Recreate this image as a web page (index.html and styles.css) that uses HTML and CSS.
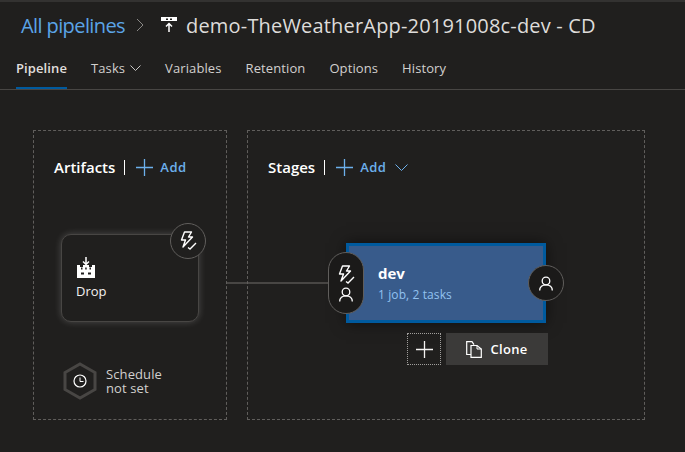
FILE: index.html
```html
<!DOCTYPE html>
<html lang="en">
<head>
<meta charset="utf-8">
<title>demo-TheWeatherApp-20191008c-dev - CD</title>
<link rel="stylesheet" href="styles.css">
</head>
<body>
<header class="header">
  <div class="crumbs">
    <a class="crumb-link">All pipelines</a>
    <svg class="crumb-sep" width="8" height="14" viewBox="0 0 8 14"><path d="M1 1l6 6-6 6" fill="none" stroke="#8a8886" stroke-width="1"/></svg>
    <svg class="crumb-icon" width="16" height="16" viewBox="0 0 16 16"><path d="M0 0h16v4h-16z" fill="#fff"/><path d="M5 1.500h2v1.500h-2zM9 1.500h2v1.500h-2z" fill="#201f1e"/><path d="M8 15V7M5 9.500l3-3 3 3" fill="none" stroke="#fff" stroke-width="1.500"/></svg>
    <h1 class="title">demo-TheWeatherApp-20191008c-dev - CD</h1>
  </div>
  <nav class="tabs">
    <a class="tab tab-active">Pipeline</a>
    <a class="tab">Tasks <svg class="chev" width="11" height="6" viewBox="0 0 11 6"><path d="M.5.500l5 5 5-5" fill="none" stroke="#c8c6c4"/></svg></a>
    <a class="tab">Variables</a>
    <a class="tab">Retention</a>
    <a class="tab">Options</a>
    <a class="tab">History</a>
  </nav>
</header>
<main class="canvas">
  <div class="connector"></div>
  <section class="panel panel-artifacts">
    <div class="panel-head">
      <h2 class="panel-title">Artifacts</h2>
      <span class="divider"></span>
      <svg class="plus" width="17" height="17" viewBox="0 0 17 17"><path d="M8.500 0v17M0 8.500h17" stroke="#6cb0ec" stroke-width="1.300"/></svg>
      <span class="add">Add</span>
    </div>
    <div class="artifact">
      <svg class="drop-icon" width="18" height="21" viewBox="0 0 18 21"><path d="M9 0v7M6 4.500l3 3 3-3" fill="none" stroke="#fff" stroke-width="1.500"/><path d="M0 8h3v2h3v-2h6v2h3v-2h3v13h-18z" fill="#fff"/><path d="M4 15.500h3v2h-3zM11 15.500h3v2h-3zM4 10.500h1.500v2h-1.500zM8.200 10.500h1.500v2h-1.500zM12.500 10.500h1.500v2h-1.500z" fill="#201f1e"/></svg>
      <span class="artifact-name">Drop</span>
    </div>
    <div class="badge badge-trigger">
      <svg width="18" height="20" viewBox="0 0 18 20"><path d="M5.500 1h7l-3 5h4l-9.500 10 2.500-7h-4z" fill="none" stroke="#fff" stroke-width="1.400" stroke-linejoin="round"/><path d="M9 16.500l2 1.500 6-6" fill="none" stroke="#fff" stroke-width="1.400"/></svg>
    </div>
    <div class="schedule">
      <svg width="34" height="38" viewBox="0 0 34 38"><path d="M17 2l15 8.500v17l-15 8.500-15-8.500v-17z" fill="none" stroke="#484644" stroke-width="3"/><circle cx="17" cy="19" r="6" fill="none" stroke="#fff" stroke-width="1.200"/><path d="M17 15.500v4h3.500" fill="none" stroke="#fff" stroke-width="1"/></svg>
      <span class="schedule-text">Schedule<br>not set</span>
    </div>
  </section>
  <section class="panel panel-stages">
    <div class="panel-head">
      <h2 class="panel-title">Stages</h2>
      <span class="divider"></span>
      <svg class="plus" width="17" height="17" viewBox="0 0 17 17"><path d="M8.500 0v17M0 8.500h17" stroke="#6cb0ec" stroke-width="1.300"/></svg>
      <span class="add">Add</span>
      <svg class="add-chev" width="13" height="7" viewBox="0 0 13 7"><path d="M.5.500l6 6 6-6" fill="none" stroke="#6cb0ec"/></svg>
    </div>
    <div class="stage">
      <span class="stage-name">dev</span>
      <span class="stage-sub">1 job, 2 tasks</span>
    </div>
    <div class="pill">
      <svg width="18" height="20" viewBox="0 0 18 20"><path d="M5.500 1h7l-3 5h4l-9.500 10 2.500-7h-4z" fill="none" stroke="#fff" stroke-width="1.400" stroke-linejoin="round"/><path d="M9 16.500l2 1.500 6-6" fill="none" stroke="#fff" stroke-width="1.400"/></svg>
      <svg width="14" height="15" viewBox="0 0 14 15"><circle cx="7" cy="5" r="3.800" fill="none" stroke="#fff" stroke-width="1.300"/><path d="M.7 14.500c0-3.500 2.500-5.700 6.300-5.700s6.300 2.200 6.300 5.700" fill="none" stroke="#fff" stroke-width="1.300"/></svg>
    </div>
    <div class="badge badge-approver">
      <svg width="14" height="15" viewBox="0 0 14 15"><circle cx="7" cy="5" r="3.800" fill="none" stroke="#fff" stroke-width="1.300"/><path d="M.7 14.500c0-3.500 2.500-5.700 6.300-5.700s6.300 2.200 6.300 5.700" fill="none" stroke="#fff" stroke-width="1.300"/></svg>
    </div>
    <div class="stage-actions">
      <button class="btn-plus"><svg width="17" height="17" viewBox="0 0 17 17"><path d="M8.500 0v17M0 8.500h17" stroke="#f3f2f1" stroke-width="1.300"/></svg></button>
      <button class="btn-clone">
        <svg width="16" height="17" viewBox="0 0 16 17"><path d="M5 13.500h-4.300v-12.800h5.300l2 3" fill="none" stroke="#fff" stroke-width="1.200"/><path d="M5 4.500h6l4.300 3.500v8.300h-10.300z" fill="#3b3a39" stroke="#fff" stroke-width="1.200"/><path d="M11 4.500v3.500h4.300" fill="none" stroke="#fff" stroke-width="1"/></svg>
        <span>Clone</span>
      </button>
    </div>
  </section>
</main>
</body>
</html>
```
FILE: styles.css
```css
html, body {
  margin: 0;
  padding: 0;
}
body {
  width: 685px;
  height: 452px;
  overflow: hidden;
  background: #201f1e;
  color: #f3f2f1;
  font-family: "Open Sans", "Noto Sans", sans-serif;
}
.header {
  border-top: 2px solid #333231;
  border-bottom: 1px solid #484644;
  height: 87px;
  box-sizing: content-box;
}
.crumbs {
  display: flex;
  align-items: center;
  height: 46px;
  padding-left: 21px;
}
.crumb-link {
  font-size: 20px;
  letter-spacing: -0.6px;
  color: #5ba4e6;
}
.crumb-sep {
  margin-left: 11px;
  margin-right: 17px;
  width: 8px;
}
.crumb-icon {
  margin-right: 9px;
}
.title {
  margin: 0;
  font-size: 20px;
  font-weight: 400;
  letter-spacing: 0.18px;
  color: #dedcda;
}
.tabs {
  display: flex;
  height: 41px;
  padding-left: 16px;
  gap: 24px;
}
.tab {
  display: flex;
  align-items: center;
  gap: 5px;
  height: 39px;
  font-size: 13px;
  letter-spacing: 0.1px;
  color: #d2d0ce;
  border-bottom: 2px solid transparent;
  margin-bottom: -1px;
  box-sizing: content-box;
}
.tab-active {
  font-weight: 600;
  color: #e1dfdd;
  border-bottom-color: #005a9e;
}
.canvas {
  position: relative;
  display: flex;
  gap: 20px;
  padding: 40px 0 0 33px;
}
.connector {
  position: absolute;
  left: 226px;
  top: 192px;
  width: 104px;
  height: 2px;
  background: #484644;
}
.panel {
  position: relative;
  height: 288px;
  border: 1px dashed #605e5c;
  box-sizing: content-box;
}
.panel-artifacts {
  width: 192px;
}
.panel-stages {
  width: 396px;
}
.panel-head {
  display: flex;
  align-items: center;
  height: 20px;
  margin-top: 26px;
  padding-left: 20px;
}
.panel-title {
  margin: 0;
  font-size: 15px;
  font-weight: 600;
  letter-spacing: 0;
  color: #fff;
}
.divider {
  width: 1px;
  height: 15px;
  background: #fff;
  margin: 0 10px 0 9px;
}
.plus {
  margin-left: 1px;
}
.add {
  margin-left: 7px;
  font-size: 13px;
  font-weight: 600;
  letter-spacing: 0.5px;
  color: #6cb0ec;
}
.add-chev {
  margin-left: 9px;
}
.artifact {
  position: absolute;
  left: 27px;
  top: 103px;
  width: 138px;
  height: 88px;
  box-sizing: border-box;
  padding: 22px 14px 0 15px;
  display: flex;
  flex-direction: column;
  align-items: flex-start;
  gap: 4px;
  border: 1px solid #484644;
  border-radius: 10px;
  background: #201f1e;
  box-shadow: 0 0 7px rgba(255, 255, 255, 0.2);
}
.artifact-name {
  margin-left: -1px;
  font-size: 13px;
  line-height: 18px;
  letter-spacing: 0;
  color: #f3f2f1;
}
.badge {
  position: absolute;
  display: flex;
  align-items: center;
  justify-content: center;
  width: 36px;
  height: 36px;
  box-sizing: border-box;
  border-radius: 50%;
  border: 1px solid #605e5c;
  background: #201f1e;
}
.badge-trigger {
  left: 136px;
  top: 92px;
}
.badge-approver {
  left: 280px;
  top: 134px;
  background: #1b1a19;
}
.schedule {
  position: absolute;
  left: 29px;
  top: 231px;
  display: flex;
  align-items: center;
  gap: 9px;
}
.schedule-text {
  font-size: 13px;
  line-height: 14px;
  letter-spacing: 0.1px;
  color: #d2d0ce;
}
.stage {
  position: absolute;
  left: 98px;
  top: 112px;
  width: 200px;
  height: 80px;
  box-sizing: border-box;
  padding: 18px 0 0 29px;
  display: flex;
  flex-direction: column;
  gap: 5px;
  border: 3px solid #005a9e;
  background: #385b8b;
  box-shadow: 0 0 14px rgba(0, 0, 0, 0.55);
}
.stage-name {
  font-size: 15px;
  font-weight: 700;
  line-height: 18px;
  letter-spacing: 0;
  color: #fff;
}
.stage-sub {
  font-size: 12px;
  line-height: 16px;
  letter-spacing: 0.1px;
  color: #92c2f0;
}
.pill {
  position: absolute;
  left: 80px;
  top: 121px;
  width: 36px;
  height: 62px;
  box-sizing: border-box;
  display: flex;
  flex-direction: column;
  align-items: center;
  justify-content: center;
  gap: 2px;
  border: 1px solid #605e5c;
  border-radius: 18px;
  background: #1b1a19;
}
.stage-actions {
  position: absolute;
  left: 159px;
  top: 202px;
  display: flex;
  gap: 5px;
}
.btn-plus {
  display: flex;
  align-items: center;
  justify-content: center;
  width: 34px;
  height: 32px;
  padding: 0;
  border: 1px dotted #a19f9d;
  background: transparent;
}
.btn-clone {
  display: flex;
  align-items: center;
  justify-content: center;
  gap: 8px;
  width: 102px;
  height: 32px;
  padding: 0;
  border: 0;
  background: #3b3a39;
  color: #fff;
  font-family: inherit;
  font-size: 13px;
  font-weight: 600;
  letter-spacing: 0.3px;
}
```
